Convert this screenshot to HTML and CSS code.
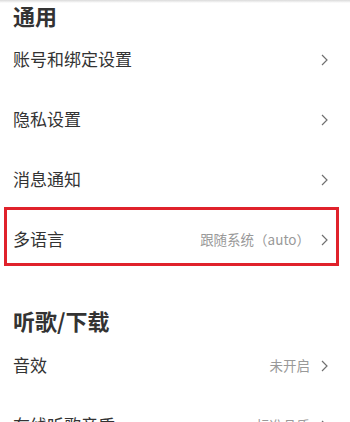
FILE: index.html
```html
<!DOCTYPE html>
<html lang="zh-CN">
    <head>
        <meta charset="utf-8">
        <title>设置</title>
        <meta name="viewport" content="width=device-width">
        <link rel="stylesheet" href="styles.css">
    </head>
	<body>
		<div class="top-shade"></div>
		<section class="group">
			<h2 class="group-title">通用</h2>
			<div class="item">
				<span class="item-label">账号和绑定设置</span>
				<span class="item-arrow"><svg width="7" height="12" viewBox="0 0 7 12"><path d="M1 1l5 5-5 5" /></svg></span>
			</div>
			<div class="item">
				<span class="item-label">隐私设置</span>
				<span class="item-arrow"><svg width="7" height="12" viewBox="0 0 7 12"><path d="M1 1l5 5-5 5" /></svg></span>
			</div>
			<div class="item">
				<span class="item-label">消息通知</span>
				<span class="item-arrow"><svg width="7" height="12" viewBox="0 0 7 12"><path d="M1 1l5 5-5 5" /></svg></span>
			</div>
			<div class="item highlighted">
				<span class="item-label">多语言</span>
				<span class="item-value">跟随系统（auto）</span>
				<span class="item-arrow"><svg width="7" height="12" viewBox="0 0 7 12"><path d="M1 1l5 5-5 5" /></svg></span>
				<span class="mark-box"></span>
			</div>
		</section>
		<section class="group">
			<h2 class="group-title">听歌/下载</h2>
			<div class="item">
				<span class="item-label">音效</span>
				<span class="item-value">未开启</span>
				<span class="item-arrow"><svg width="7" height="12" viewBox="0 0 7 12"><path d="M1 1l5 5-5 5" /></svg></span>
			</div>
			<div class="item">
				<span class="item-label">在线听歌音质</span>
				<span class="item-value">标准品质</span>
				<span class="item-arrow"><svg width="7" height="12" viewBox="0 0 7 12"><path d="M1 1l5 5-5 5" /></svg></span>
			</div>
		</section>
	</body>
</html>
```

FILE: styles.css
```css
html, body {
    margin: 0;
    padding: 0;
}

body {
    background-color: #FFFFFF;
    color: #333333;
    font-family: "Noto Sans CJK SC", "Noto Sans", sans-serif;
    overflow: hidden;
}

.top-shade {
    height: 3px;
    background: linear-gradient(#DADADA, #FFFFFF);
}

.group + .group {
    margin-top: 37px;
}

.group-title {
    margin: 0;
    height: 27px;
    padding-left: 13px;
    font-size: 22px;
    font-weight: bold;
    line-height: 25px;
    color: #333333;
}

.group + .group .group-title {
    height: 29px;
    line-height: 27px;
}

.item {
    position: relative;
    display: flex;
    align-items: center;
    box-sizing: border-box;
    height: 60px;
    padding: 0 22px 3px 13px;
}

.item-label {
    flex: 1;
    font-size: 17px;
    color: #333333;
}

.item-value {
    font-size: 13.5px;
    color: #999999;
    margin-right: 11px;
}

.item-arrow {
    display: flex;
    padding-top: 3px;
}

.item-arrow path {
    fill: none;
    stroke: #707070;
    stroke-width: 1.2;
}

/* red annotation frame drawn over the row */
.mark-box {
    position: absolute;
    left: 4px;
    top: -3px;
    width: 329px;
    height: 53px;
    border: 3px solid #E0222B;
}
```
